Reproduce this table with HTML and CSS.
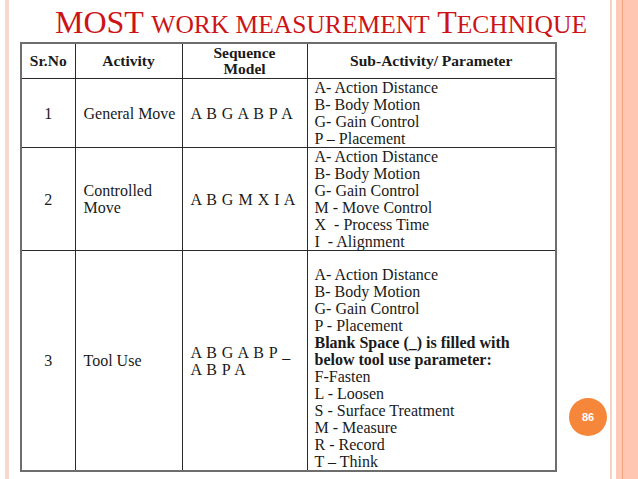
FILE: index.html
```html
<!DOCTYPE html>
<html>
<head>
<meta charset="utf-8">
<link rel="stylesheet" href="styles.css">
</head>
<body>
<div class="slide">
  <h1 class="title">MOST <span class="sc">WORK MEASUREMENT</span> T<span class="sc">ECHNIQUE</span></h1>
  <table class="most">
    <colgroup>
      <col class="c1"><col class="c2"><col class="c3"><col class="c4">
    </colgroup>
    <tr class="head">
      <th>Sr.No</th>
      <th>Activity</th>
      <th>Sequence<br>Model</th>
      <th>Sub-Activity/ Parameter</th>
    </tr>
    <tr>
      <td class="num">1</td>
      <td class="act">General Move</td>
      <td class="seq">A B G A B P A</td>
      <td class="sub">A- Action Distance<br>B- Body Motion<br>G- Gain Control<br>P – Placement</td>
    </tr>
    <tr>
      <td class="num">2</td>
      <td class="act">Controlled<br>Move</td>
      <td class="seq">A B G M X I A</td>
      <td class="sub">A- Action Distance<br>B- Body Motion<br>G- Gain Control<br>M - Move Control<br>X &nbsp;- Process Time<br>I &nbsp;- Alignment</td>
    </tr>
    <tr>
      <td class="num">3</td>
      <td class="act">Tool Use</td>
      <td class="seq">A B G A B P _<br>A B P A</td>
      <td class="sub sub-tall">A- Action Distance<br>B- Body Motion<br>G- Gain Control<br>P - Placement<br><b>Blank Space (_) is filled with<br>below tool use parameter:</b><br>F-Fasten<br>L - Loosen<br>S - Surface Treatment<br>M - Measure<br>R - Record<br>T – Think</td>
    </tr>
  </table>
  <div class="badge">86</div>
</div>
</body>
</html>
```

FILE: styles.css
```css
html, body {
  margin: 0;
  padding: 0;
}
body {
  width: 638px;
  height: 479px;
  overflow: hidden;
  background:
    linear-gradient(to right,
      #ffffff 0, #ffffff 5px,
      #f7d9d0 5px, #f7d9d0 9px,
      #ffffff 9px, #ffffff 610px,
      #f8d0c2 610px, #f8d0c2 612px,
      #ffffff 612px, #ffffff 616px,
      #fccab6 616px, #fccab6 622px,
      #f0a27e 622px, #f0a27e 623px,
      #ffc6b1 623px, #ffc6b1 638px);
  font-family: "Liberation Serif", "Times New Roman", serif;
  color: #1a1a1a;
}
.slide {
  position: relative;
  width: 638px;
  height: 479px;
}
.title {
  margin: 0;
  padding: 2px 0 0 55px;
  height: 40px;
  line-height: 40px;
  font-family: "Liberation Serif", "Times New Roman", serif;
  font-size: 32px;
  font-weight: normal;
  color: #cc1418;
  white-space: nowrap;
}
.sc {
  font-size: 25.5px;
}
.most {
  margin-left: 20px;
  width: 537px;
  table-layout: fixed;
  border-collapse: collapse;
  border: 2px solid #6d6d6d;
  font-family: "Liberation Serif", "Times New Roman", serif;
  font-size: 16px;
  line-height: 17px;
  color: #1a1a1a;
}
.c1 { width: 54px; }
.c2 { width: 107px; }
.c3 { width: 125px; }
.c4 { width: 249px; }
.most th, .most td {
  border: 1px solid #2a2a2a;
  padding: 0 7px;
  overflow: visible;
}
.most .head th {
  height: 34px;
  font-size: 15.5px;
  line-height: 16px;
  font-weight: bold;
  text-align: center;
  vertical-align: middle;
  padding: 0 4px;
}
.most .num {
  text-align: center;
  vertical-align: middle;
}
.most .act {
  padding: 0 2px 0 8px;
  vertical-align: middle;
  white-space: nowrap;
}
.most .seq {
  padding: 0 2px 0 8px;
  vertical-align: middle;
  letter-spacing: 0.5px;
  white-space: nowrap;
}
.most .sub {
  vertical-align: top;
  white-space: nowrap;
}
.most .sub-tall {
  padding-top: 15px;
}
.badge {
  position: absolute;
  left: 569px;
  top: 398px;
  width: 38px;
  height: 38px;
  border-radius: 50%;
  background: #f6863a;
  color: #ffffff;
  font-family: "Liberation Sans", Arial, sans-serif;
  font-size: 11px;
  font-weight: bold;
  line-height: 38px;
  text-align: center;
}
```
